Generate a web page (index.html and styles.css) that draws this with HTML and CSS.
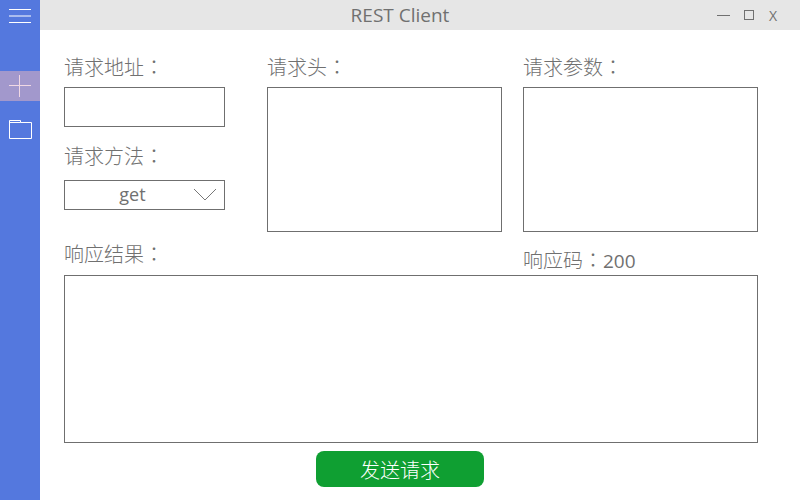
FILE: index.html
```html
<!DOCTYPE html>
<html lang="zh-CN">
<head>
    <meta charset="UTF-8">
    <meta name="viewport" content="width=device-width, initial-scale=1.0">
    <title>REST Client</title>
    <link rel="stylesheet" href="styles.css">
</head>
<body>
    <div class="app">
        <nav class="sidebar">
            <button class="nav-btn menu-btn">
                <svg width="22" height="16" viewBox="0 0 22 16"><path d="M0 1.5h22M0 8h22M0 14.5h22" stroke="#fff" fill="none"/></svg>
            </button>
            <button class="nav-btn add-btn">
                <svg width="22" height="22" viewBox="0 0 22 22"><path d="M0 10.5h22M10.5 0v22" stroke="#f0d8e4" fill="none"/></svg>
            </button>
            <button class="nav-btn folder-btn">
                <svg width="23" height="20" viewBox="0 0 23 20"><path d="M.5 .5h11v2h11v16H.5zM.5 2.5h11" stroke="#fff" fill="none"/></svg>
            </button>
        </nav>
        <div class="main">
            <header class="titlebar">
                <span class="title">REST Client</span>
                <div class="win-btns">
                    <span class="win-min"></span>
                    <span class="win-max"></span>
                    <span class="win-close">X</span>
                </div>
            </header>
            <form class="form">
                <div class="top-row">
                    <div class="col-left">
                        <label class="label">请求地址<span class="colon" lang="zh-TW">：</span></label>
                        <input class="box url-input" type="text">
                        <label class="label method-label">请求方法<span class="colon" lang="zh-TW">：</span></label>
                        <div class="box select">
                            <span class="select-value">get</span>
                            <svg class="select-arrow" width="24" height="14" viewBox="0 0 24 14"><path d="M1 1l11 11L23 1" stroke="#777" fill="none"/></svg>
                        </div>
                    </div>
                    <div class="col-mid">
                        <label class="label">请求头<span class="colon" lang="zh-TW">：</span></label>
                        <textarea class="box area"></textarea>
                    </div>
                    <div class="col-right">
                        <label class="label">请求参数<span class="colon" lang="zh-TW">：</span></label>
                        <textarea class="box area"></textarea>
                    </div>
                </div>
                <div class="result-head">
                    <label class="label result-label">响应结果<span class="colon" lang="zh-TW">：</span></label>
                    <div class="label code-label">响应码<span class="colon" lang="zh-TW">：</span><span class="code-value">200</span></div>
                </div>
                <textarea class="box result"></textarea>
                <div class="actions">
                    <button class="send-btn" type="button">发送请求</button>
                </div>
            </form>
        </div>
    </div>
</body>
</html>
```
FILE: styles.css
```css
* {
    box-sizing: border-box;
}
body {
    margin: 0;
    font-family: "Open Sans", "Noto Sans CJK SC", sans-serif;
    font-weight: 300;
    color: #707070;
}
.app {
    display: flex;
    width: 800px;
    height: 500px;
    overflow: hidden;
}
.sidebar {
    display: flex;
    flex-direction: column;
    width: 40px;
    background-color: #5478de;
}
.nav-btn {
    display: flex;
    justify-content: center;
    align-items: center;
    width: 40px;
    padding: 0;
    border: none;
    background: none;
}
.menu-btn {
    height: 32px;
    margin-bottom: 39px;
}
.add-btn {
    height: 30px;
    margin-bottom: 14px;
    background-color: #a298cc;
}
.folder-btn {
    height: 30px;
}
.main {
    flex: 1;
    display: flex;
    flex-direction: column;
    background-color: #fff;
}
.titlebar {
    position: relative;
    display: flex;
    justify-content: center;
    align-items: center;
    height: 30px;
    padding-right: 40px;
    background-color: #e6e6e6;
}
.title {
    font-size: 19px;
    font-weight: 400;
}
.win-btns {
    position: absolute;
    top: 0;
    right: 21px;
    display: flex;
    align-items: center;
    height: 30px;
    gap: 14px;
}
.win-min {
    width: 13px;
    height: 1px;
    background-color: #707070;
}
.win-max {
    width: 10px;
    height: 10px;
    margin-right: 1px;
    border: 1px solid #707070;
}
.win-close {
    font-size: 14px;
    font-weight: 400;
    width: 10px;
}
.form {
    padding: 22px 42px 0 24px;
}
.top-row {
    display: flex;
    height: 180px;
}
.label {
    display: block;
    height: 30px;
    margin-bottom: 5px;
    font-size: 20px;
    line-height: 30px;
}
.colon {
    font-family: "Noto Sans CJK TC", sans-serif;
}
.code-value {
    font-size: 19px;
    font-weight: 400;
}
.box {
    display: block;
    margin: 0;
    border: 1px solid #6f6f6f;
    border-radius: 0;
    background-color: #fff;
    outline: none;
    resize: none;
}
.col-left {
    width: 161px;
    margin-right: 42px;
}
.col-mid,
.col-right {
    display: flex;
    flex-direction: column;
    width: 235px;
}
.col-mid {
    margin-right: 21px;
}
.url-input {
    width: 161px;
    height: 40px;
}
.method-label {
    margin-top: 14px;
    margin-bottom: 9px;
}
.select {
    position: relative;
    height: 30px;
    padding-right: 24px;
    font-size: 18px;
    font-weight: 400;
    line-height: 27px;
    text-align: center;
}
.select-arrow {
    position: absolute;
    top: 7px;
    right: 7px;
}
.area {
    width: 235px;
    height: 145px;
}
.result-head {
    display: flex;
    justify-content: space-between;
    height: 43px;
}
.result-label {
    margin-top: 7px;
}
.code-label {
    width: 235px;
    margin-top: 13px;
}
.result {
    width: 694px;
    height: 168px;
}
.actions {
    display: flex;
    justify-content: center;
    padding-top: 8px;
    padding-right: 22px;
}
.send-btn {
    width: 168px;
    height: 36px;
    border: none;
    border-radius: 8px;
    background-color: #0f9f32;
    color: #fff;
    font-family: inherit;
    font-size: 20px;
    font-weight: 300;
}
```
